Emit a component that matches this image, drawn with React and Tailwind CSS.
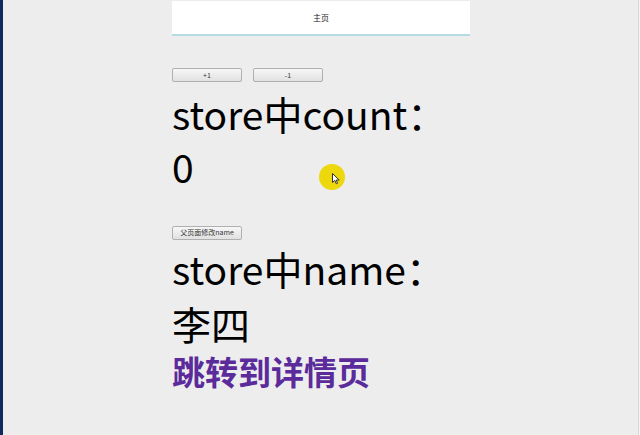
export default function App() {
  const font = { fontFamily: '"Microsoft YaHei", "Noto Sans CJK SC", "Noto Sans", sans-serif' };
  return (
    <div className="relative flex h-[435px] w-[640px] overflow-hidden bg-[#ededed]" style={font}>
      <div className="h-full w-[3px] shrink-0 bg-[#0e2b5c]" />
      <div className="ml-[169px] flex w-[298px] flex-col pt-[1px]">
        <div className="flex h-[35px] items-center justify-center border-b-2 border-[#b5dbe3] bg-white text-[8px] text-[#222]">
          主页
        </div>
        <div className="mt-[32px] flex gap-[11px]">
          <button className="h-[14px] w-[70px] rounded-[2px] border border-[#b0b0b0] bg-gradient-to-b from-[#f7f7f7] to-[#e1e1e1] text-[7px] leading-none text-[#333]">+1</button>
          <button className="h-[14px] w-[70px] rounded-[2px] border border-[#b0b0b0] bg-gradient-to-b from-[#f7f7f7] to-[#e1e1e1] text-[7px] leading-none text-[#333]">-1</button>
        </div>
        <div className="mt-[5px] whitespace-nowrap text-[39px] leading-[53px] text-black">
          <div>store中count：</div>
          <div>0</div>
        </div>
        <div className="mt-[23px]">
          <button className="h-[14px] w-[70px] rounded-[2px] border border-[#b0b0b0] bg-gradient-to-b from-[#f7f7f7] to-[#e1e1e1] text-[7px] leading-none text-[#333]">父页面修改name</button>
        </div>
        <div className="mt-[2px] whitespace-nowrap text-[39px] leading-[53px] text-black">
          <div>store中name：</div>
          <div className="leading-[56px]">李四</div>
        </div>
        <div className="text-[33px] font-bold leading-[40px] text-[#5b2b9b]">跳转到详情页</div>
      </div>
      <div className="absolute right-0 top-0 h-full w-[2px] border-l border-[#d8d8d8] bg-[#f4f4f4]" />
      <div className="absolute left-[319px] top-[164px] h-[26px] w-[26px] rounded-full bg-[#ecd80c]" />
      <svg className="absolute left-[332px] top-[173px]" width="8" height="12" viewBox="0 0 8 12">
        <path d="M0.5 0.5 L0.5 9.5 L2.8 7.4 L4.3 10.8 L5.6 10.2 L4.2 7 L7.2 7 Z" fill="#fff" stroke="#333" strokeWidth="1" />
      </svg>
    </div>
  );
}
